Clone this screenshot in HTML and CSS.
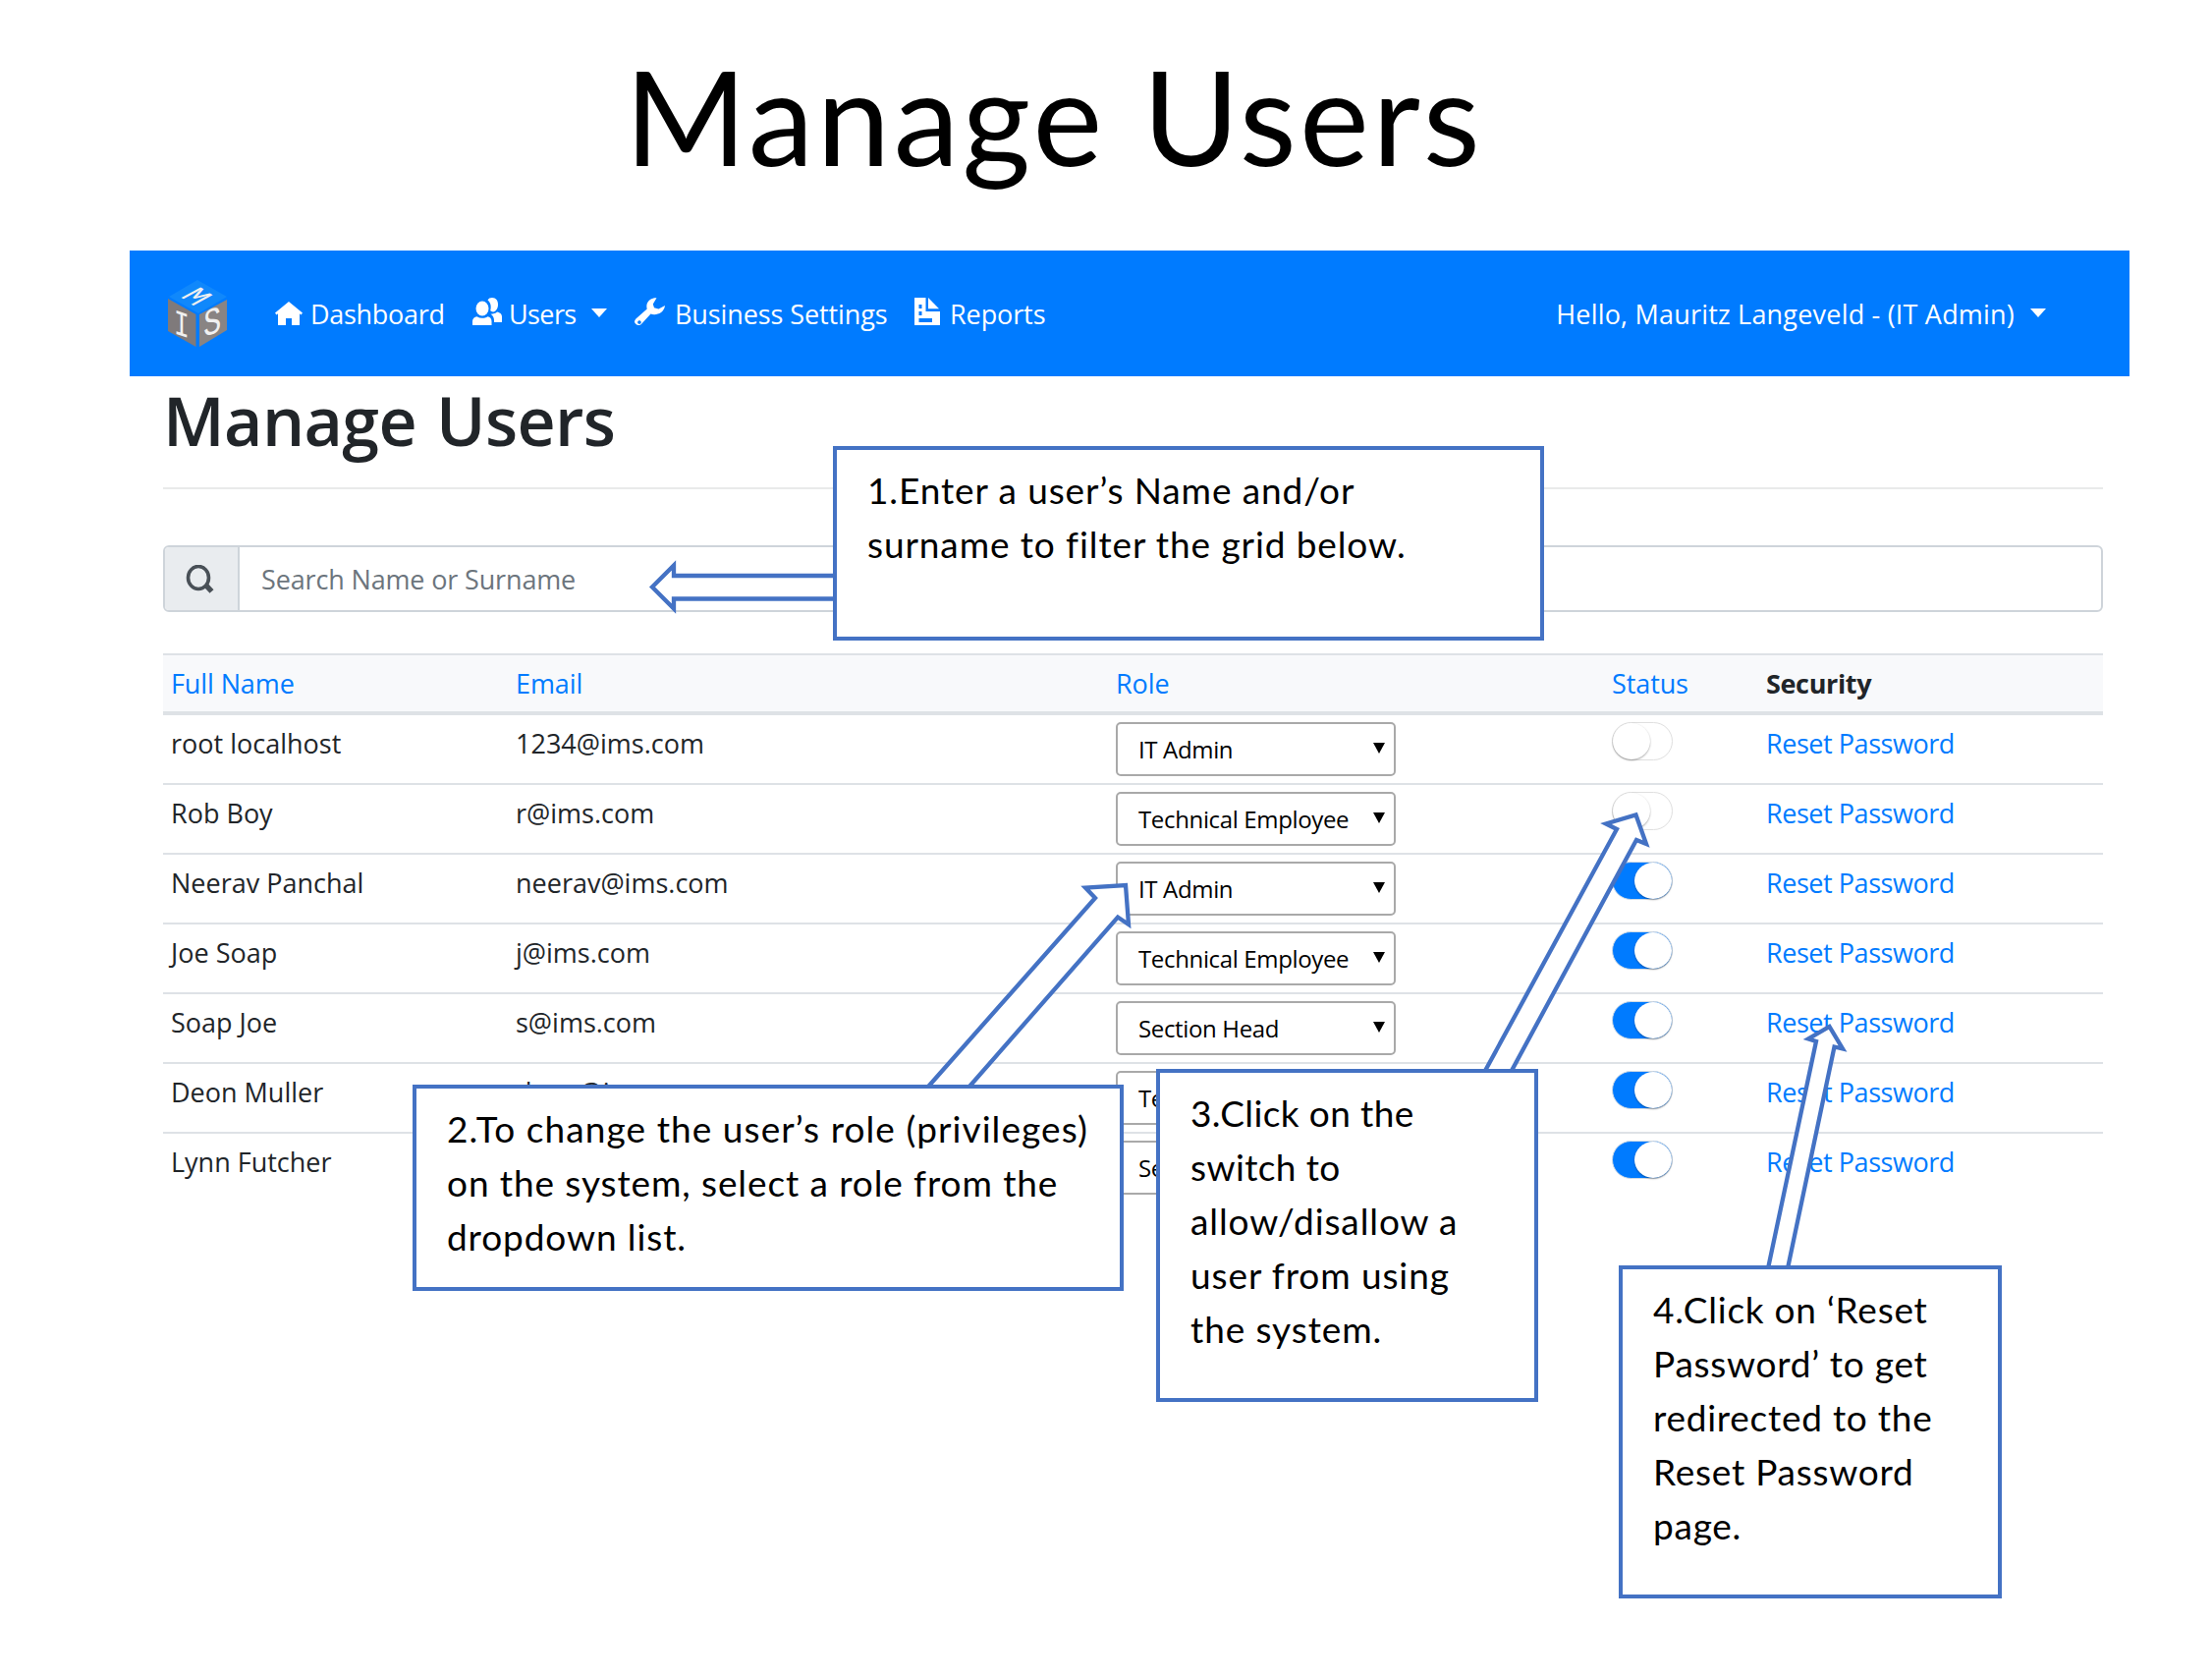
FILE: index.html
```html
<!DOCTYPE html>
<html lang="en">
<head>
<meta charset="utf-8">
<title>Manage Users</title>
<link rel="stylesheet" href="styles.css">
</head>
<body>
<main class="slide">
  <h1 class="slide-title">Manage Users</h1>

  <section class="app">
    <nav class="navbar">
      <svg class="logo" viewBox="0 0 61 68" width="61" height="68">
        <polygon points="30,0 60,17 31,34 1,17" fill="#1088fb"/>
        <polygon points="0,19 28.5,35 28.5,68 0,52" fill="#7f7a7b"/>
        <polygon points="32,35 60,20 60,51 32,68" fill="#898483"/>
        <g class="logo-text">
          <text transform="matrix(.95 .62 -1.1 .6 12 17)" font-size="27">M</text>
          <text transform="matrix(.8 .28 0 1.1 6 54)" font-size="33">I</text>
          <text transform="matrix(.9 -.3 0 1.15 36 58)" font-size="34">S</text>
        </g>
      </svg>
      <a class="nav-link dashboard">
        <svg viewBox="0 0 28 24" width="28" height="24"><path fill="#fff" d="M14 0 28 11.5 26.5 13.500 25 12.300V24H17V17H11V24H3V12.300L1.500 13.500 0 11.500Z"/></svg>
        <span>Dashboard</span>
      </a>
      <a class="nav-link users">
        <svg viewBox="0 0 30 28" width="30" height="28"><g fill="#fff"><path d="M20 0c4 0 6 3 6 7s-2 7-5 7.500c-1 0-2-.5-2.800-1.200C19.300 9 18.800 5 15.500 2.500 16.300.8 18 0 20 0Z"/><ellipse cx="10" cy="11" rx="6.500" ry="7.500"/><path d="M0 28v-4c0-2.600 2-4.500 4.500-4.800 3.500 2 7.500 2 11 0 2.500.3 4 2.200 4 4.800v4ZM22 25v-2c0-3-1.500-5-3.500-6.300C21 16.500 24 16 25 14.500c3 .5 5 2.500 5 5V25Z"/></g></svg>
        <span>Users</span><i class="caret"></i>
      </a>
      <a class="nav-link settings">
        <svg viewBox="0 0 31 28" width="31" height="28"><path fill="#fff" fill-rule="evenodd" d="M22.500.3C18 0 13.500 2.500 12.500 7c-.4 2 0 3.500.2 4.500L1.400 21.500c-2 2-1.700 4 .1 5.500s4.200 1.200 5.800-.6L16.500 16.500c5 2 13.500-.5 14.500-8.500l-6.500 3.500-4.500-1.200-1.200-3.800ZM5 23.200a1.800 1.800 0 1 1-.1 0Z"/></svg>
        <span>Business Settings</span>
      </a>
      <a class="nav-link reports">
        <svg viewBox="0 0 27 28" width="27" height="28"><path fill="#fff" fill-rule="evenodd" d="M0 0H11.500V14H26V28H0ZM4.500 7v4h3V7ZM4.500 14v4h3v-4ZM4.500 21v4H18v-4Z"/><path fill="#fff" d="M14 0 25 11.300H14Z"/></svg>
        <span>Reports</span>
      </a>
      <a class="nav-link account"><span>Hello, Mauritz Langeveld - (IT Admin)</span><i class="caret"></i></a>
    </nav>

    <div class="content">
      <h2 class="page-title">Manage Users</h2>
      <hr class="rule">
      <div class="search">
        <span class="search-icon">
          <svg viewBox="0 0 30 30" width="30" height="30" fill="none" stroke="#495057"><ellipse cx="13" cy="13" rx="10.500" ry="11.500" stroke-width="3.600"/><path d="M20.500 20.500 26.500 27" stroke-width="5.500"/></svg>
        </span>
        <span class="search-field">Search Name or Surname</span>
      </div>

      <table class="grid">
        <colgroup><col class="c-name"><col class="c-email"><col class="c-role"><col class="c-status"><col></colgroup>
        <thead>
          <tr><th><a>Full Name</a></th><th><a>Email</a></th><th><a>Role</a></th><th><a>Status</a></th><th class="plain">Security</th></tr>
        </thead>
        <tbody>
          <tr><td>root localhost</td><td>1234@ims.com</td><td><div class="select"><span>IT Admin</span><i></i></div></td><td><div class="switch"></div></td><td><a>Reset Password</a></td></tr>
          <tr><td>Rob Boy</td><td>r@ims.com</td><td><div class="select"><span>Technical Employee</span><i></i></div></td><td><div class="switch"></div></td><td><a>Reset Password</a></td></tr>
          <tr><td>Neerav Panchal</td><td>neerav@ims.com</td><td><div class="select"><span>IT Admin</span><i></i></div></td><td><div class="switch on"></div></td><td><a>Reset Password</a></td></tr>
          <tr><td>Joe Soap</td><td>j@ims.com</td><td><div class="select"><span>Technical Employee</span><i></i></div></td><td><div class="switch on"></div></td><td><a>Reset Password</a></td></tr>
          <tr><td>Soap Joe</td><td>s@ims.com</td><td><div class="select"><span>Section Head</span><i></i></div></td><td><div class="switch on"></div></td><td><a>Reset Password</a></td></tr>
          <tr><td>Deon Muller</td><td>deon@ims.com</td><td><div class="select"><span>Technical Employee</span><i></i></div></td><td><div class="switch on"></div></td><td><a>Reset Password</a></td></tr>
          <tr><td>Lynn Futcher</td><td></td><td><div class="select"><span>Section Head</span><i></i></div></td><td><div class="switch on"></div></td><td><a>Reset Password</a></td></tr>
        </tbody>
      </table>
    </div>
  </section>

  <!-- Annotation arrows and boxes float over the screen -->
  <svg class="arrows" viewBox="0 0 2252 1709" width="2252" height="1709">
    <polygon points="870,586 686,586 686,575.500 664,597.500 686,619.500 686,609.500 870,609.500"/>
    <polygon points="930,1123 1115,914 1105,903.500 1146,901 1149,941 1138,933.500 972,1123"/>
    <polygon points="1501,1110 1646,844 1635,838.500 1665.500,829.500 1676,859 1666,855 1528,1110"/>
    <polygon points="1796,1310 1849,1060 1841,1057.500 1862.500,1045 1876,1067.500 1867.500,1065.500 1816,1310"/>
  </svg>
  <div class="note note-1">1.Enter a user’s Name and/or<br>surname to filter the grid below.</div>
  <div class="note note-2"><span class="wide">2.To change the user’s role (privileges)</span><br>on the system, select a role from the<br>dropdown list.</div>
  <div class="note note-3"><span class="tight">3.Click on the</span><br><span class="tight">switch to</span><br>allow/disallow a<br>user from using<br>the system.</div>
  <div class="note note-4">4.Click on ‘Reset<br>Password’ to get<br>redirected to the<br>Reset Password<br>page.</div>
</main>
</body>
</html>
```
FILE: styles.css
```css
* { box-sizing: border-box; }
body { margin: 0; background: #fff; }
.slide {
  position: relative;
  width: 2252px;
  height: 1709px;
  overflow: hidden;
  font-family: "Open Sans", "Noto Sans", sans-serif;
  font-size: 27px;
  color: #212529;
}
.slide-title {
  margin: 0;
  height: 255px;
  padding: 38px 0 0 636px;
  font: 400 134px/160px Lato, sans-serif;
  letter-spacing: 3.3px;
  white-space: nowrap;
  color: #000;
}
.app { width: 2036px; margin-left: 132px; }

.navbar {
  display: flex;
  align-items: flex-start;
  height: 128px;
  padding: 30px 85px 0 39px;
  background: #007bff;
  color: #fff;
}
.nav-link {
  display: flex;
  align-items: flex-end;
  height: 46px;
  white-space: nowrap;
}
.nav-link span { line-height: 38px; margin-bottom: -8px; }
.nav-link svg { display: block; }
.logo { overflow: visible; }
.logo-text { fill: #f0f0f0; font-family: "Liberation Mono", monospace; }
.dashboard { margin-left: 48px; gap: 8px; width: 201px; letter-spacing: -.3px; }
.users { gap: 7px; width: 165px; letter-spacing: -.6px; }
.settings { gap: 10px; width: 285px; letter-spacing: -.1px; }
.reports { gap: 9px; letter-spacing: -.1px; }
.account { margin-left: auto; letter-spacing: .2px; }
.caret {
  border: 8px solid transparent;
  border-top: 9px solid #fff;
  border-bottom: 0;
  margin: 0 0 8px 16px;
}
.users .caret { margin-left: 8px; }

.content { padding: 0 27px 0 34px; }
.page-title {
  margin: 0;
  padding: 3px 0 0 0;
  height: 113px;
  font-size: 68px;
  font-weight: 600;
  line-height: 84px;
  letter-spacing: -.6px;
  word-spacing: 3px;
}
.rule { margin: 0; border: 0; height: 2px; background: #e9eaea; }
.search {
  display: flex;
  margin-top: 57px;
  height: 68px;
  border: 2px solid #ced4da;
  border-radius: 6px;
  overflow: hidden;
}
.search-icon {
  display: flex;
  align-items: center;
  justify-content: center;
  width: 76px;
  padding: 2px 2px 0 0;
  background: #e9ecef;
  border-right: 2px solid #ced4da;
}
.search-field { padding-left: 22px; line-height: 66px; letter-spacing: -.15px; color: #6c757d; }

.grid {
  width: 100%;
  margin-top: 42px;
  table-layout: fixed;
  border-collapse: separate;
  border-spacing: 0;
}
.c-name { width: 351px; }
.c-email { width: 610px; }
.c-role { width: 505px; }
.c-status { width: 157px; }
.grid a { color: #007bff; }
th {
  height: 63px;
  padding: 1px 9px 0 8px;
  background: #f8f9fb;
  border-top: 2px solid #dee2e6;
  border-bottom: 4px solid #dee2e6;
  text-align: left;
  font-weight: 400;
  line-height: 50px;
  letter-spacing: -.1px;
}
th.plain { font-weight: 700; letter-spacing: -.35px; }
td {
  height: 71px;
  padding: 7px 9px 0 8px;
  border-bottom: 2px solid #dee2e6;
  vertical-align: top;
  line-height: 44px;
  letter-spacing: 0;
  white-space: nowrap;
}
td:nth-child(5) { letter-spacing: -.45px; }
td:nth-child(n+3), th:nth-child(n+3) { padding-left: 9px; }
tr:last-child td { border-bottom: 0; }
.select {
  display: flex;
  justify-content: space-between;
  width: 285px;
  height: 55px;
  padding: 0 9px 0 21px;
  border: 2px solid #a9a9a9;
  border-radius: 5px;
  font-size: 24px;
  line-height: 52px;
  letter-spacing: -.35px;
  color: #000;
}
.select i {
  height: 0;
  margin-top: 19px;
  border: 6px solid transparent;
  border-top: 11px solid #000;
  border-bottom: 0;
}
.switch {
  display: flex;
  width: 62px;
  height: 39px;
  border: 1.5px solid #dfdfdf;
  border-radius: 20px;
}
.switch::before {
  content: "";
  width: 38px;
  height: 37px;
  border-radius: 50%;
  background: #fff;
  box-shadow: 0 1px 2px rgba(0, 0, 0, .35);
}
.switch.on { justify-content: flex-end; background: #007bff; border-color: #d2dbe4; }

.arrows { position: absolute; left: 0; top: 0; }
.arrows polygon { fill: #fff; stroke: #4472c4; stroke-width: 4.3; stroke-miterlimit: 10; }
.note {
  position: absolute;
  padding: 13px 0 0 31px;
  border: 4px solid #4472c4;
  background: #fff;
  font: 400 37px/55px Lato, sans-serif;
  letter-spacing: .9px;
  white-space: nowrap;
  color: #000;
}
.wide { letter-spacing: 1.08px; }
.tight { letter-spacing: .4px; }
.note-1 { left: 848px; top: 454px; width: 724px; height: 198px; }
.note-2 { left: 420px; top: 1104px; width: 724px; height: 210px; }
.note-3 { left: 1177px; top: 1088px; width: 389px; height: 339px; }
.note-4 { left: 1648px; top: 1288px; width: 390px; height: 339px; letter-spacing: .75px; }
```
